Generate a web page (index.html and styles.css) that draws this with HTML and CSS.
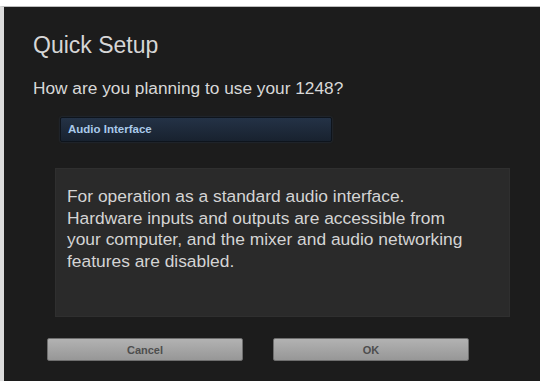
FILE: index.html
```html
<!DOCTYPE html>
<html lang="en">
<head>
  <meta charset="UTF-8">
  <title>Quick Setup</title>
  <link rel="stylesheet" href="styles.css">
</head>
<body>
  <div class="dialog">
    <h1 class="title">Quick Setup</h1>
    <p class="question">How are you planning to use your 1248?</p>

    <div class="mode-select">Audio Interface</div>

    <div class="description">
      For operation as a standard audio interface.<br>
      Hardware inputs and outputs are accessible from<br>
      your computer, and the mixer and audio networking<br>
      features are disabled.
    </div>

    <div class="actions">
      <button class="btn">Cancel</button>
      <button class="btn">OK</button>
    </div>
  </div>
</body>
</html>
```

FILE: styles.css
```css
body {
  margin: 0;
  background-color: #fff;
  font-family: "Liberation Sans", Arial, sans-serif;
  overflow: hidden;
}

.dialog {
  box-sizing: border-box;
  margin-top: 6px;
  height: 375px;
  border-left: 4px solid #dcdcdc;
  border-top: 1px solid #bdbdbd;
  background-color: #1c1c1c;
  padding: 25px 0 0 29px;
}

.title {
  margin: 0;
  font-size: 23px;
  font-weight: normal;
  color: #d6d6d6;
}

.question {
  margin: 19px 0 0;
  font-size: 17.3px;
  color: #d8d8d8;
}

.mode-select {
  box-sizing: border-box;
  margin: 18px 0 0 27px;
  width: 272px;
  height: 25px;
  padding: 5px 0 0 7px;
  background: linear-gradient(#243246, #18222f);
  border: 1px solid #0e141c;
  border-radius: 2px;
  box-shadow: 0 0 2px rgba(60, 90, 130, 0.5);
  font-size: 11.5px;
  font-weight: bold;
  color: #a9c9ea;
}

.description {
  box-sizing: border-box;
  margin: 26px 0 0 22px;
  width: 455px;
  height: 149px;
  padding: 17px 0 0 11px;
  background-color: #2a2a2a;
  border: 1px solid #2f2f2f;
  font-size: 17.4px;
  line-height: 21.7px;
  color: #d4d4d4;
}

.actions {
  display: flex;
  gap: 30px;
  margin: 21px 0 0 14px;
}

.btn {
  width: 196px;
  height: 23px;
  padding: 0;
  background: linear-gradient(#b2b2b2, #979797);
  border: 1px solid #6e6e6e;
  border-radius: 2px;
  font-family: "Liberation Sans", Arial, sans-serif;
  font-size: 11px;
  font-weight: bold;
  color: #4e4e4e;
}
```
